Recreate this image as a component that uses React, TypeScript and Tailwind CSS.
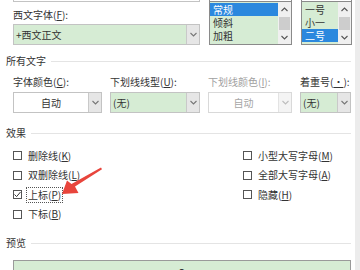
import React from 'react';

const font = { fontFamily: '"Noto Sans CJK SC", "Noto Sans", sans-serif' };

const Chevron = ({ up = false, color = '#666' }: { up?: boolean; color?: string }) => (
  <svg width="7" height="5" viewBox="0 0 7 5">
    <polyline
      points={up ? '0.5,4 3.5,1 6.5,4' : '0.5,1 3.5,4 6.5,1'}
      fill="none"
      stroke={color}
      strokeWidth="1.1"
    />
  </svg>
);

const Dropdown = ({
  text,
  green = false,
  center = false,
  disabled = false,
  w,
}: {
  text: string;
  green?: boolean;
  center?: boolean;
  disabled?: boolean;
  w: string;
}) => (
  <div
    className={`flex h-[21px] border ${w} ${green ? 'bg-[#d6ecd4]' : 'bg-white'} ${
      disabled ? 'border-[#d9d9d9]' : 'border-[#c3c3c3]'
    }`}
  >
    <div
      className={`flex flex-1 items-center px-[2px] text-[10px] leading-[14px] ${center ? 'justify-center' : ''} ${
        disabled ? 'text-[#a6a6a6]' : 'text-[#333]'
      }`}
    >
      {text}
    </div>
    <div
      className={`flex w-[13px] items-center justify-center border-l ${
        disabled ? 'border-[#e3e3e3] bg-[#f4f4f4]' : 'border-[#c9c9c9] bg-[#e6e6e6]'
      }`}
    >
      <Chevron color={disabled ? '#bdbdbd' : '#777'} />
    </div>
  </div>
);

const ListBox = ({ items, selected, w }: { items: string[]; selected: number; w: string }) => (
  <div className={`flex h-[43px] border border-t-0 border-[#8a8a8a] bg-[#d6ecd4] ${w}`}>
    <div className="flex flex-1 flex-col pt-[1px]">
      {items.map((it, i) => (
        <div
          key={it}
          className={`flex h-[13px] items-center px-[3px] text-[10px] leading-[13px] ${
            i === selected ? 'bg-[#2b88de] text-white' : 'text-[#333]'
          }`}
        >
          {it}
        </div>
      ))}
    </div>
    <div className="flex w-[13px] flex-col bg-[#f0f0f0]">
      <div className="flex h-[14px] items-center justify-center">
        <Chevron up color="#555" />
      </div>
      <div className="mx-[1px] mt-[1px] h-[13px] bg-[#cdcdcd]" />
      <div className="flex h-[14px] items-center justify-center">
        <Chevron color="#555" />
      </div>
    </div>
  </div>
);

const GroupHeader = ({ title, className }: { title: string; className: string }) => (
  <div className={`flex h-[14px] items-center pl-[6px] pr-[4px] ${className}`}>
    <span className="text-[10px] leading-[14px] text-[#333]">{title}</span>
    <div className="ml-[5px] h-px flex-1 bg-[#e4e4e4]" />
  </div>
);

const Check = ({ label, checked = false, focus = false }: { label: React.ReactNode; checked?: boolean; focus?: boolean }) => (
  <div className="flex h-[19.5px] items-center">
    <div className="flex h-[9px] w-[9px] items-center justify-center border border-[#555] bg-white">
      {checked && (
        <svg width="7" height="7" viewBox="0 0 7 7">
          <polyline points="0.5,3.5 2.6,5.6 6.5,1" fill="none" stroke="#333" strokeWidth="1" />
        </svg>
      )}
    </div>
    <span
      className={`ml-[4px] px-[1px] text-[10px] leading-[14px] text-[#333] ${
        focus ? 'border border-dotted border-[#555]' : 'border border-transparent'
      }`}
    >
      {label}
    </span>
  </div>
);

export default function App() {
  return (
    <div className="relative flex h-[270px] w-[360px] overflow-hidden bg-white" style={font}>
      <div className="flex w-[355px] flex-col">
        {/* top: font / style / size */}
        <div className="mt-[-19px] flex pl-[13px]">
          <div className="flex w-[187px] flex-col">
            <div className="h-[21px] border border-[#c3c3c3] bg-white" />
            <div className="mt-[6px] text-[10px] leading-[14px] text-[#333]">
              西文字体(<u>F</u>):
            </div>
            <div className="mt-[2px] flex h-[21px] border border-[#c3c3c3] bg-[#d6ecd4]">
              <div className="flex flex-1 items-center pl-[2px] text-[10px] leading-[14px] text-[#333]">+西文正文</div>
              <div className="flex w-[13px] items-center justify-center border-l border-[#c9c9c9] bg-[#e6e6e6]">
                <Chevron color="#777" />
              </div>
            </div>
          </div>
          <div className="ml-[9px] flex w-[83px] flex-col">
            <div className="h-[21px] border border-[#8a8a8a] bg-white" />
            <ListBox items={['常规', '倾斜', '加粗']} selected={0} w="w-[83px]" />
          </div>
          <div className="ml-[9px] flex w-[51px] flex-col">
            <div className="h-[21px] border border-[#8a8a8a] bg-white" />
            <ListBox items={['一号', '小一', '二号']} selected={2} w="w-[51px]" />
          </div>
        </div>

        <GroupHeader title="所有文字" className="mt-[9px]" />

        <div className="mt-[7px] flex gap-[8px] pl-[13px]">
          <div className="flex w-[89px] flex-col">
            <div className="text-[10px] leading-[14px] text-[#333]">
              字体颜色(<u>C</u>):
            </div>
            <div className="mt-[3px]">
              <Dropdown text="自动" center w="w-[89px]" />
            </div>
          </div>
          <div className="flex w-[90px] flex-col">
            <div className="text-[10px] leading-[14px] text-[#333]">
              下划线线型(<u>U</u>):
            </div>
            <div className="mt-[3px]">
              <Dropdown text="(无)" green w="w-[90px]" />
            </div>
          </div>
          <div className="flex w-[84px] flex-col">
            <div className="text-[10px] leading-[14px] text-[#a0a0a0]">
              下划线颜色(<u>I</u>):
            </div>
            <div className="mt-[3px]">
              <Dropdown text="自动" center disabled w="w-[84px]" />
            </div>
          </div>
          <div className="flex w-[51px] flex-col">
            <div className="text-[10px] leading-[14px] text-[#333]">
              着重号(<u>·</u>):
            </div>
            <div className="mt-[3px]">
              <Dropdown text="(无)" green w="w-[51px]" />
            </div>
          </div>
        </div>

        <GroupHeader title="效果" className="mt-[13px]" />

        <div className="mt-[6px] flex pl-[13px]">
          <div className="flex w-[230px] flex-col">
            <Check label={<>删除线(<u>K</u>)</>} />
            <Check label={<>双删除线(<u>L</u>)</>} />
            <Check label={<>上标(<u>P</u>)</>} checked focus />
            <Check label={<>下标(<u>B</u>)</>} />
          </div>
          <div className="flex flex-col">
            <Check label={<>小型大写字母(<u>M</u>)</>} />
            <Check label={<>全部大写字母(<u>A</u>)</>} />
            <Check label={<>隐藏(<u>H</u>)</>} />
          </div>
        </div>

        <GroupHeader title="预览" className="mt-[12px]" />

        <div className="ml-[13px] mt-[10px] h-[40px] w-[338px] shrink-0 border border-[#9a9a9a] bg-[#d6ecd4]">
          <div className="pt-[5px] text-center text-[12px] leading-[14px] text-[#333]">2</div>
        </div>
      </div>
      <div className="w-[5px] bg-[#ececec]" />

      {/* red annotation arrow */}
      <svg className="pointer-events-none absolute left-0 top-0" width="360" height="270">
        <polygon points="101,167.5 102,169.2 75,186.5 78.5,193 62,194 67,180.5 71.5,184" fill="#e8453c" />
      </svg>
    </div>
  );
}
